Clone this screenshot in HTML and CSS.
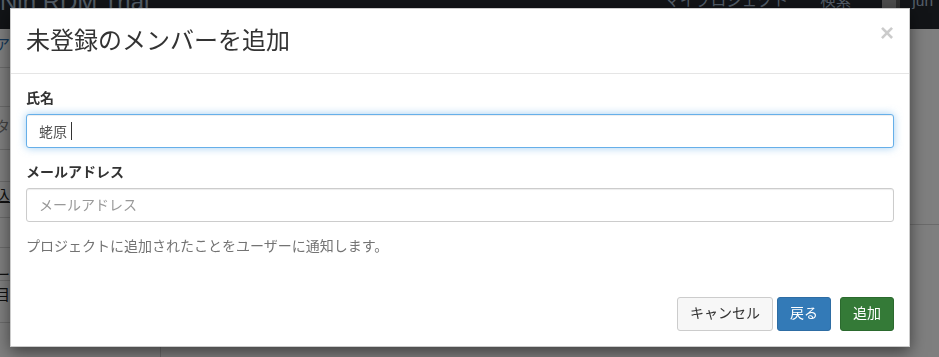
FILE: index.html
```html
<!DOCTYPE html>
<html lang="ja">
<head>
    <meta charset="UTF-8">
    <meta name="viewport" content="width=device-width, initial-scale=1.0">
    <title>未登録のメンバーを追加</title>
    <link rel="stylesheet" href="styles.css">
</head>
<body>
    <div class="page">
        <nav class="navbar">
            <div class="brand">Nin RDM Trial</div>
            <ul class="nav-links">
                <li>マイプロジェクト</li>
                <li>検索</li>
                <li class="user"><span class="avatar"></span>jun</li>
            </ul>
        </nav>

        <div class="main">
            <aside class="sidebar">
                <div class="side-row r1 link">ア</div>
                <div class="side-row r2"></div>
                <div class="side-row r3 muted">タ</div>
                <div class="side-row r4"></div>
                <div class="side-row r5 under">込</div>
                <div class="side-row r6"></div>
                <div class="side-row r7">ー</div>
                <div class="side-row r8">目</div>
            </aside>
            <section class="content">
                <div class="panel"></div>
            </section>
        </div>
    </div>

    <div class="backdrop"></div>

    <div class="modal">
        <div class="modal-header">
            <h3 class="modal-title">未登録のメンバーを追加</h3>
            <button class="close" type="button">&times;</button>
        </div>

        <div class="modal-body">
            <div class="form-group">
                <label for="name">氏名</label>
                <div class="input-wrap">
                    <input id="name" class="form-control focused" type="text" value="蛯原">
                    <span class="caret"></span>
                </div>
            </div>
            <div class="form-group">
                <label for="email">メールアドレス</label>
                <input id="email" class="form-control" type="text" placeholder="メールアドレス">
            </div>
            <p class="help">プロジェクトに追加されたことをユーザーに通知します。</p>
        </div>

        <div class="modal-footer">
            <button class="btn btn-default">キャンセル</button>
            <button class="btn btn-primary">戻る</button>
            <button class="btn btn-success">追加</button>
        </div>
    </div>
</body>
</html>
```

FILE: styles.css
```css
* {
    margin: 0;
    padding: 0;
    box-sizing: border-box;
}

body {
    font-family: "Liberation Sans", "Noto Sans CJK JP", sans-serif;
    font-size: 14px;
    line-height: 1.42857;
    color: #333;
    background-color: #fff;
    overflow: hidden;
    height: 357px;
}

/* page behind the dialog */

.page {
    height: 100vh;
    display: flex;
    flex-direction: column;
}

.navbar {
    height: 29px;
    background-color: #24292f;
    display: flex;
    justify-content: space-between;
    overflow: hidden;
}

.brand {
    font-size: 24px;
    line-height: 24px;
    margin-top: -10px;
    color: #a9bccf;
    white-space: nowrap;
}

.nav-links {
    list-style: none;
    display: flex;
    margin-top: -9px;
    font-size: 15.5px;
    line-height: 20px;
    color: #aabdd2;
}

.nav-links li {
    margin-left: 32px;
    white-space: nowrap;
}

.nav-links .user {
    display: flex;
    margin-left: 31px;
    padding-right: 6px;
}

.avatar {
    width: 18px;
    height: 18px;
    margin-right: 12px;
    background-color: #9a9a9a;
    border-right: 4px solid #5e5e5e;
}

.main {
    flex: 1;
    display: flex;
}

.sidebar {
    width: 161px;
    border-right: 1px solid #d6d6d6;
    background-color: #fff;
    overflow: hidden;
}

.side-row {
    border-bottom: 1px solid #d6d6d6;
    padding: 6px 0 0;
    margin-left: -5px;
    font-size: 15px;
    line-height: 20px;
    white-space: nowrap;
    color: #222;
}

.side-row.link { color: #2a6fb0; }
.side-row.muted { color: #888; padding-top: 10px; }
.side-row.under { text-decoration: underline; }

.r1 { height: 39px; }
.r2 { height: 39px; }
.r3 { height: 43px; }
.r4 { height: 32px; }
.r5 { height: 36px; padding-top: 4px; }
.r6 { height: 30px; }
.r7 { height: 33px; padding-top: 22px; line-height: 10px; }
.r8 { height: 42px; padding-top: 4px; }

.content {
    flex: 1;
}

.panel {
    height: 196px;
    border-bottom: 1px solid #d6d6d6;
}

.backdrop {
    position: fixed;
    inset: 0;
    background-color: rgba(0, 0, 0, 0.5);
}

/* dialog */

.modal {
    position: absolute;
    top: 8px;
    left: 10px;
    width: 900px;
    background-color: #fff;
    border: 1px solid rgba(0, 0, 0, 0.2);
    box-shadow: 0 5px 15px rgba(0, 0, 0, 0.5);
}

.modal-header {
    display: flex;
    justify-content: space-between;
    align-items: flex-start;
    padding: 15px;
    border-bottom: 1px solid #e5e5e5;
}

.modal-title {
    font-size: 24px;
    line-height: 34px;
    font-weight: 400;
    color: #333;
}

.close {
    margin-top: -3px;
    border: none;
    background: none;
    font-family: "Liberation Sans", sans-serif;
    font-size: 24px;
    font-weight: bold;
    line-height: 1;
    color: #000;
    opacity: 0.2;
    cursor: pointer;
}

.modal-body {
    padding: 15px;
}

.form-group {
    margin-bottom: 15px;
}

label {
    display: block;
    margin-bottom: 5px;
    font-weight: bold;
}

.input-wrap {
    position: relative;
}

.form-control {
    display: block;
    width: 100%;
    height: 34px;
    padding: 6px 12px;
    font-family: inherit;
    font-size: 14px;
    line-height: 1.42857;
    color: #555;
    background-color: #fff;
    border: 1px solid #ccc;
    border-radius: 3px;
    box-shadow: inset 0 1px 1px rgba(0, 0, 0, 0.075);
    outline: none;
}

.form-control::placeholder {
    color: #999;
}

.form-control.focused {
    border-color: #66afe9;
    box-shadow: inset 0 1px 1px rgba(0, 0, 0, 0.075), 0 0 8px rgba(102, 175, 233, 0.6);
}

.caret {
    position: absolute;
    left: 45px;
    top: 8px;
    width: 1px;
    height: 18px;
    background-color: #333;
}

.help {
    color: #737373;
    margin-bottom: 10px;
}

.modal-footer {
    display: flex;
    justify-content: flex-end;
    padding: 15px;
}

.btn {
    padding: 6px 12px;
    font-family: inherit;
    font-size: 14px;
    line-height: 1.42857;
    border: 1px solid transparent;
    border-radius: 3px;
    cursor: pointer;
}

.btn-default {
    color: #333;
    background-color: #f7f7f7;
    border-color: #ccc;
}

.btn-primary {
    margin-left: 4px;
    color: #fff;
    background-color: #337ab7;
    border-color: #2e6da4;
}

.btn-success {
    margin-left: 9px;
    color: #fff;
    background-color: #347a37;
    border-color: #2b6a2e;
}
```
